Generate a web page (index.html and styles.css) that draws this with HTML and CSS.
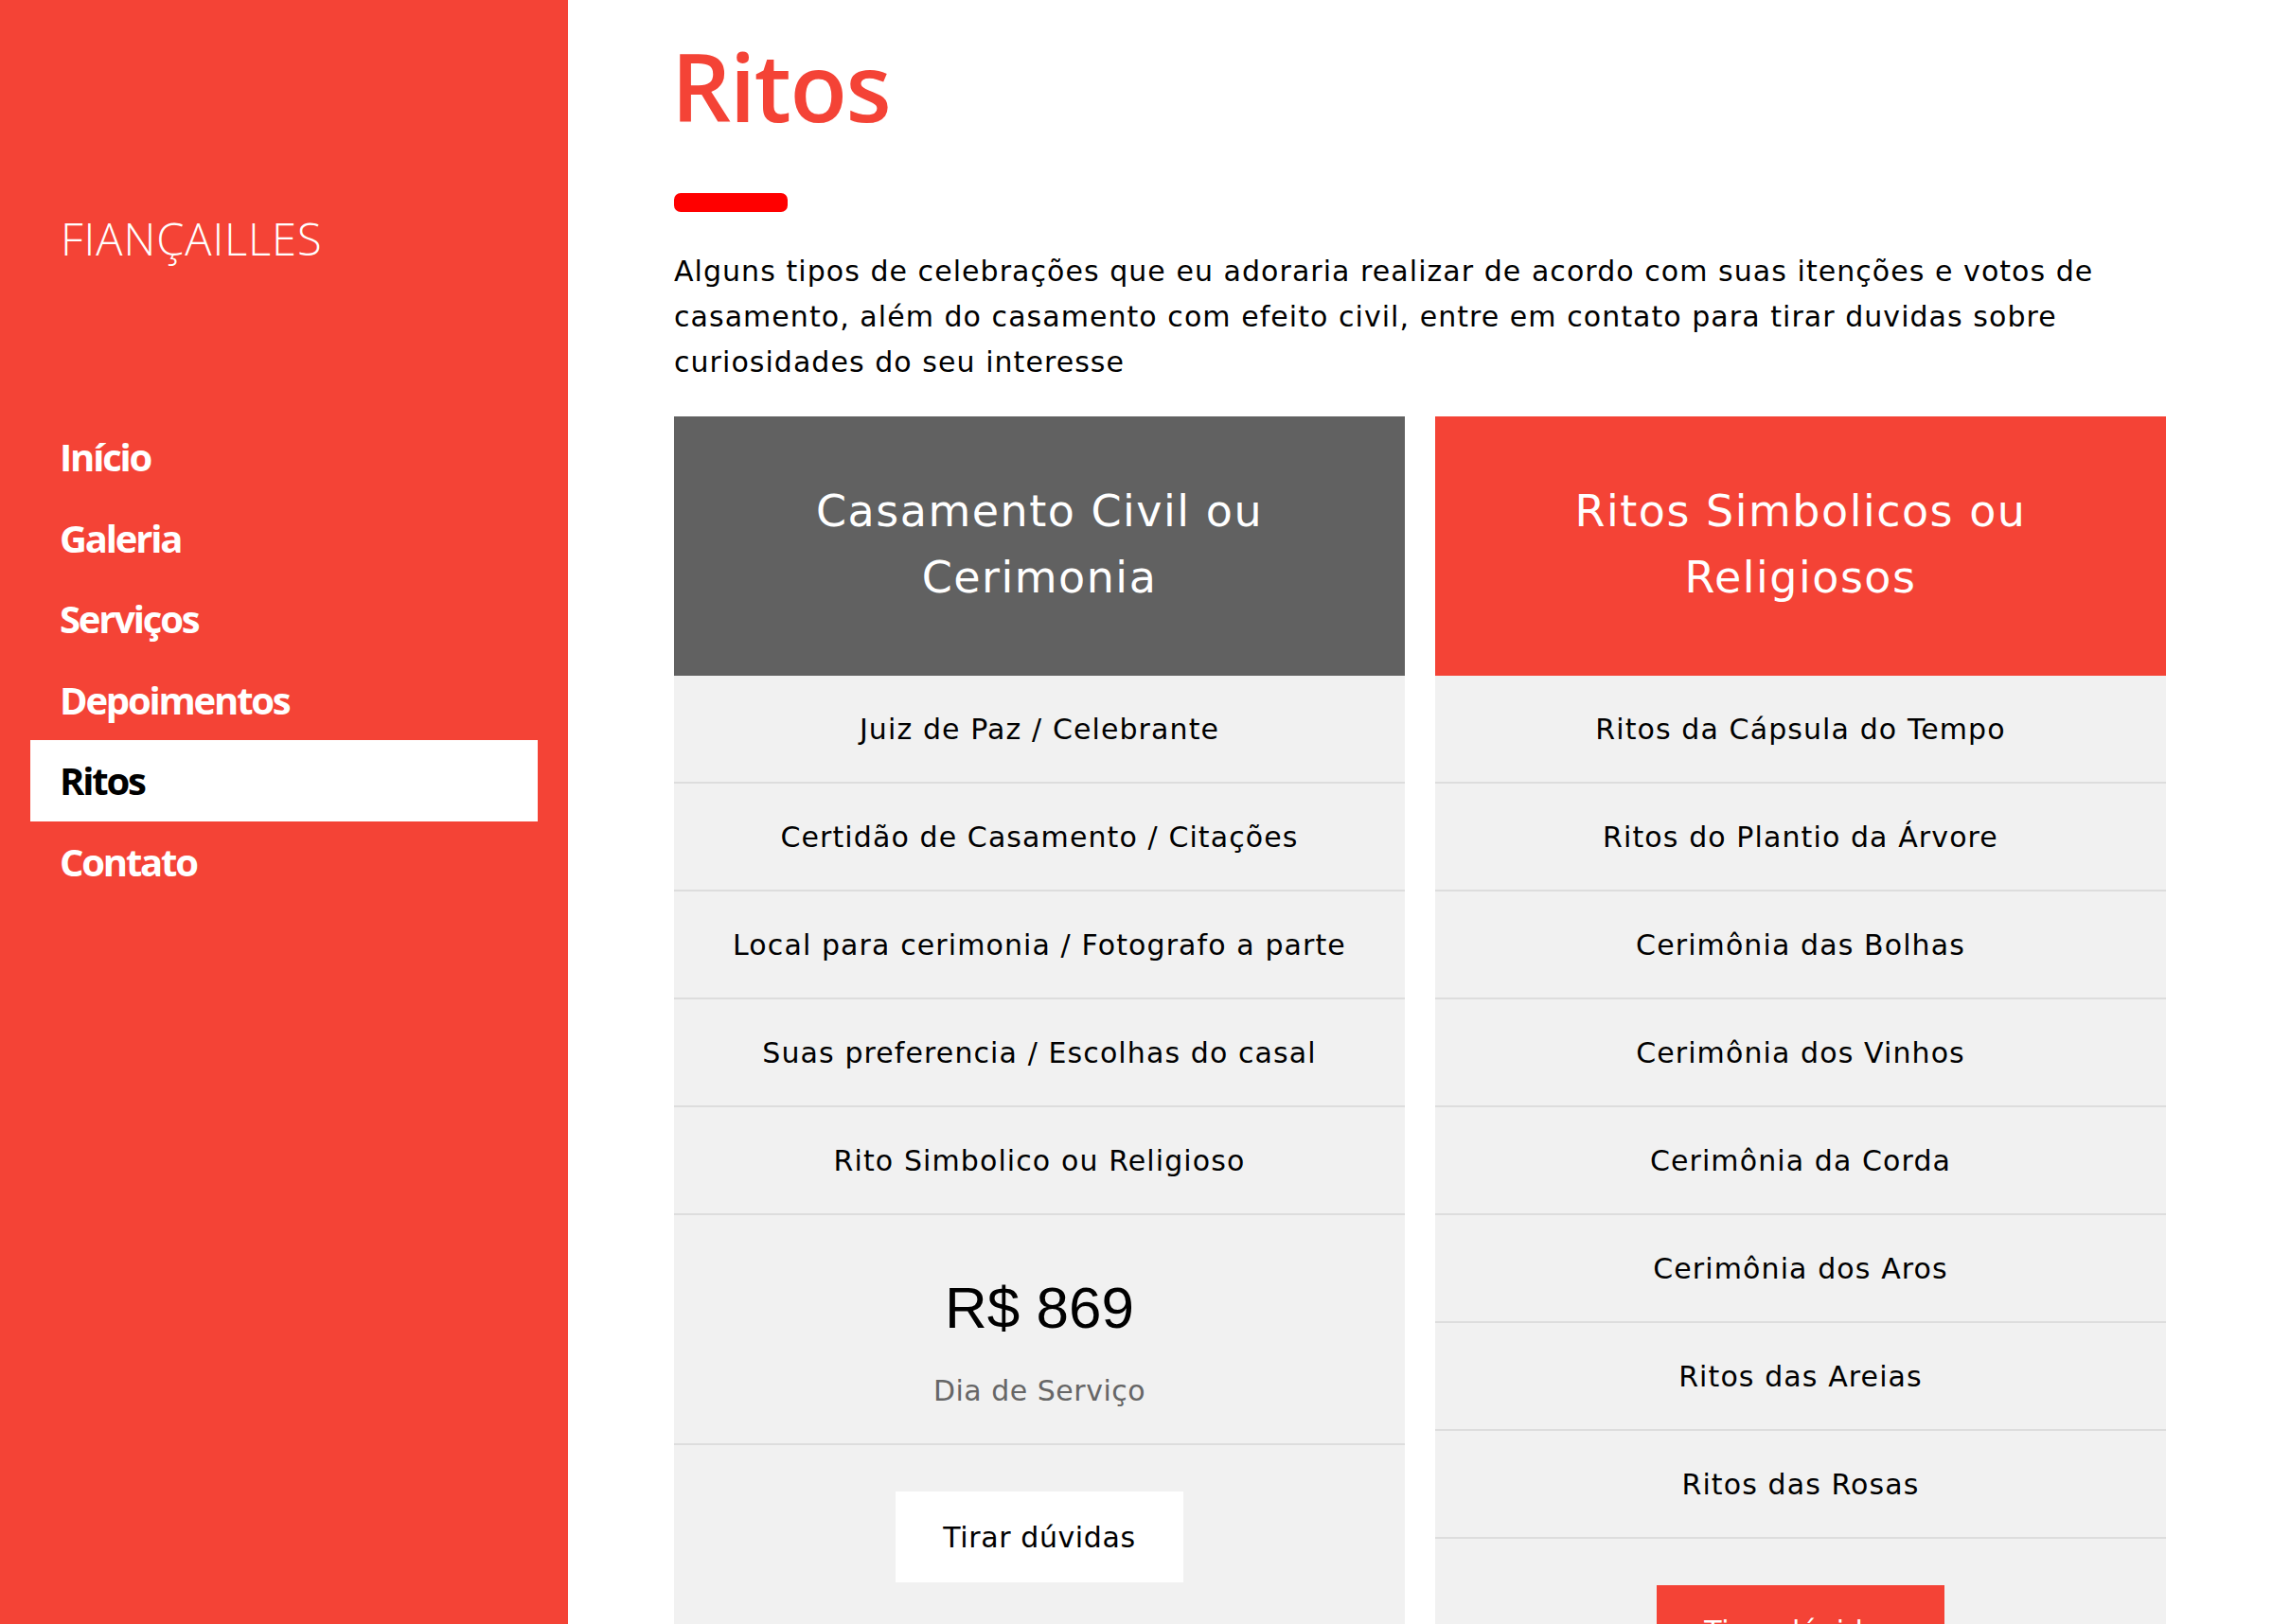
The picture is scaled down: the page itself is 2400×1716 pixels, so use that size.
FILE: index.html
```html
<!DOCTYPE html>
<html lang="pt">
<head>
<meta charset="utf-8">
<title>Ritos</title>
<link rel="stylesheet" href="styles.css">
</head>
<body>
<aside class="sidebar">
  <div class="brand">FIANÇAILLES</div>
  <nav class="nav">
    <a href="#">Início</a>
    <a href="#">Galeria</a>
    <a href="#">Serviços</a>
    <a href="#">Depoimentos</a>
    <a href="#" class="active">Ritos</a>
    <a href="#">Contato</a>
  </nav>
</aside>
<main class="main">
  <div class="content">
    <h1 class="title">Ritos</h1>
    <div class="bar"></div>
    <p class="intro">Alguns tipos de celebrações que eu adoraria realizar de acordo com suas itenções e votos de<br>casamento, além do casamento com efeito civil, entre em contato para tirar duvidas sobre<br>curiosidades do seu interesse</p>
    <div class="plans">
      <section class="plan">
        <header class="plan-head grey">Casamento Civil ou<br>Cerimonia</header>
        <ul class="plan-list">
          <li>Juiz de Paz / Celebrante</li>
          <li>Certidão de Casamento / Citações</li>
          <li>Local para cerimonia / Fotografo a parte</li>
          <li>Suas preferencia / Escolhas do casal</li>
          <li>Rito Simbolico ou Religioso</li>
          <li class="price-row">
            <div class="price">R$ 869</div>
            <div class="price-sub">Dia de Serviço</div>
          </li>
        </ul>
        <div class="plan-foot"><a class="btn btn-white" href="#">Tirar dúvidas</a></div>
      </section>
      <section class="plan">
        <header class="plan-head red">Ritos Simbolicos ou<br>Religiosos</header>
        <ul class="plan-list">
          <li>Ritos da Cápsula do Tempo</li>
          <li>Ritos do Plantio da Árvore</li>
          <li>Cerimônia das Bolhas</li>
          <li>Cerimônia dos Vinhos</li>
          <li>Cerimônia da Corda</li>
          <li>Cerimônia dos Aros</li>
          <li>Ritos das Areias</li>
          <li>Ritos das Rosas</li>
        </ul>
        <div class="plan-foot"><a class="btn btn-red" href="#">Tirar dúvidas</a></div>
      </section>
    </div>
  </div>
</main>
</body>
</html>
```
FILE: styles.css
```css
* { box-sizing: border-box; }
html, body { margin: 0; padding: 0; }
body {
  display: flex;
  font-family: "DejaVu Sans", "Open Sans", sans-serif;
  color: #000;
  background: #fff;
  min-height: 100vh;
}
.sidebar {
  width: 600px;
  flex: 0 0 600px;
  background: #f44336;
  padding: 0 32px;
  min-height: 100vh;
}
.brand {
  color: #fff;
  font-family: "Open Sans", sans-serif;
  font-weight: 300;
  font-size: 47px;
  line-height: 60px;
  letter-spacing: 0.9px;
  padding-left: 32px;
  margin-top: 221.5px;
}
.nav {
  margin-top: 158.5px;
  display: flex;
  flex-direction: column;
}
.nav a {
  display: block;
  height: 85.5px;
  line-height: 85.5px;
  padding: 0 31px;
  color: #fff;
  text-decoration: none;
  font-family: "Open Sans", sans-serif;
  font-weight: 700;
  font-size: 40px;
  letter-spacing: -2.2px;
}
.nav a.active {
  background: #fff;
  color: #000;
}
.main {
  flex: 1;
}
.content {
  width: 1576px;
  margin: 0 auto;
}
.title {
  margin: 0 0 0 -3px;
  padding-top: 31px;
  font-family: "Open Sans", sans-serif;
  font-size: 99px;
  line-height: 120px;
  font-weight: 600;
  letter-spacing: -1.5px;
  color: #f44336;
}
.bar {
  width: 120px;
  height: 20px;
  background: #ff0000;
  border-radius: 7px;
  margin-top: 53px;
}
.intro {
  margin: 38.5px 0 0;
  font-size: 30px;
  line-height: 48px;
  letter-spacing: 1.05px;
}
.plans {
  margin-top: 33.5px;
  display: grid;
  grid-template-columns: 772px 772px;
  gap: 32px;
  align-items: start;
}
.plan {
  background: #f1f1f1;
}
.plan-head {
  height: 274px;
  display: flex;
  align-items: center;
  justify-content: center;
  text-align: center;
  color: #fff;
  font-size: 46px;
  line-height: 70px;
  letter-spacing: 1.5px;
  padding-bottom: 4px;
}
.plan-head.grey { background: #616161; }
.plan-head.red { background: #f44336; }
.plan-list {
  list-style: none;
  margin: 0;
  padding: 0;
}
.plan-list li {
  height: 114px;
  border-bottom: 2px solid #dddddd;
  display: flex;
  align-items: center;
  justify-content: center;
  font-size: 30px;
  letter-spacing: 1.1px;
  text-align: center;
}
.plan-list li.price-row {
  height: 243px;
  flex-direction: column;
  justify-content: flex-start;
  padding-top: 61.5px;
}
.price {
  font-family: "Liberation Sans", Arial, sans-serif;
  font-size: 62px;
  line-height: 72px;
  letter-spacing: 0;
}
.price-sub {
  margin-top: 32px;
  font-size: 30px;
  line-height: 40px;
  letter-spacing: 0.5px;
  color: #666;
}
.plan-foot {
  padding: 49px 0 48px;
  display: flex;
  justify-content: center;
}
.btn {
  display: flex;
  align-items: center;
  justify-content: center;
  width: 304px;
  height: 96px;
  font-size: 30px;
  letter-spacing: 0.6px;
  text-decoration: none;
}
.btn-white { background: #fff; color: #000; }
.btn-red { background: #f44336; color: #fff; }
```
